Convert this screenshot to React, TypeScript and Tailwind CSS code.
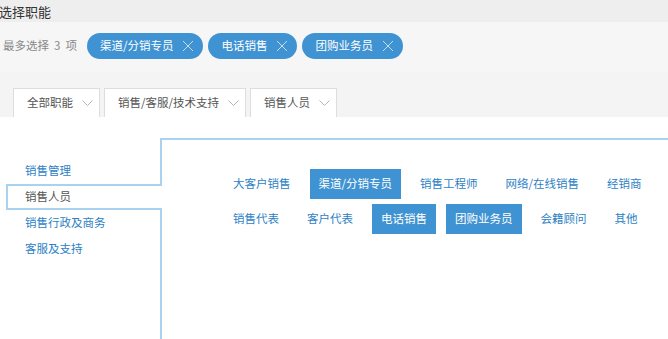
import type { ReactNode } from 'react';

const selectedTags = ['渠道/分销专员', '电话销售', '团购业务员'];

const tabs = ['全部职能', '销售/客服/技术支持', '销售人员'];

const categories = ['销售管理', '销售人员', '销售行政及商务', '客服及支持'];

const rows = [
  [
    { name: '大客户销售', on: false },
    { name: '渠道/分销专员', on: true },
    { name: '销售工程师', on: false },
    { name: '网络/在线销售', on: false },
    { name: '经销商', on: false },
  ],
  [
    { name: '销售代表', on: false },
    { name: '客户代表', on: false },
    { name: '电话销售', on: true },
    { name: '团购业务员', on: true },
    { name: '会籍顾问', on: false },
    { name: '其他', on: false },
  ],
];

const CloseIcon = () => (
  <svg className="w-[12px] h-[12px]" viewBox="0 0 12 12" fill="none">
    <path d="M1 1l10 10M11 1L1 11" stroke="#c4def3" strokeWidth={1} />
  </svg>
);

const Chevron = () => (
  <svg className="w-[11px] h-[6px]" viewBox="0 0 11 6" fill="none">
    <path d="M0.5 0.5l5 5 5-5" stroke="#b5b5b5" strokeWidth={1} />
  </svg>
);

const Tag = ({ children }: { children: ReactNode }) => (
  <span className="flex items-center h-[26px] pl-[13px] pr-[9px] gap-[9px] rounded-full bg-[#3f93d2] text-white text-[11.5px]">
    {children}
    <CloseIcon />
  </span>
);

export default function App() {
  return (
    <div
      className="w-[668px] h-[339px] overflow-hidden bg-white"
      style={{ fontFamily: '"Noto Sans CJK SC", "Noto Sans", sans-serif' }}
    >
      {/* Title */}
      <div className="h-[22px] bg-[#eeeeee] flex items-center">
        <h1 className="text-[13px] text-[#333] leading-none -ml-[1px]">选择职能</h1>
      </div>

      {/* Selected tags */}
      <div className="h-[50px] bg-[#f6f6f6] pt-[11px] flex items-start">
        <span className="text-[11.5px] text-[#888] ml-[3px] mr-[10px] h-[26px] flex items-center">
          最多选择<span className="mx-[5px]">3</span>项
        </span>
        <div className="flex gap-[5px]">
          {selectedTags.map((t) => (
            <Tag key={t}>{t}</Tag>
          ))}
        </div>
      </div>

      {/* Tabs */}
      <div className="h-[45px] bg-[#f4f4f4] flex items-end pl-[13px] gap-[4px]">
        {tabs.map((t) => (
          <div
            key={t}
            className="h-[29px] bg-white border border-b-0 border-[#dddddd] flex items-center pl-[13px] pr-[6px] gap-[9px] text-[11.5px] text-[#555]"
          >
            {t}
            <Chevron />
          </div>
        ))}
      </div>

      <div className="h-[21px]" />

      {/* Body */}
      <div className="flex h-[201px]">
        <div className="w-[160px] pt-[20px] shrink-0">
          {categories.map((c) =>
            c === '销售人员' ? (
              <div
                key={c}
                className="relative z-10 ml-[6px] -mr-[2px] h-[26px] flex items-center pl-[17px] bg-white border-2 border-r-0 border-[#a9d2f1] text-[11.5px] text-[#555]"
              >
                {c}
              </div>
            ) : (
              <div key={c} className="h-[26px] flex items-center pl-[25px] text-[11.5px] text-[#2d7fc4]">
                {c}
              </div>
            )
          )}
        </div>

        <div className="flex-1 border-t-2 border-l-2 border-[#a9d2f1] pt-[29px] pl-[62px] flex flex-col gap-[5px]">
          {rows.map((row, i) => (
            <div key={i} className="flex gap-[10px]">
              {row.map((item) => (
                <span
                  key={item.name}
                  className={
                    item.on
                      ? 'h-[30px] px-[9px] flex items-center text-[11.5px] text-white bg-[#3f93d2]'
                      : 'h-[30px] px-[9px] flex items-center text-[11.5px] text-[#2d7fc4]'
                  }
                >
                  {item.name}
                </span>
              ))}
            </div>
          ))}
        </div>
      </div>
    </div>
  );
}
